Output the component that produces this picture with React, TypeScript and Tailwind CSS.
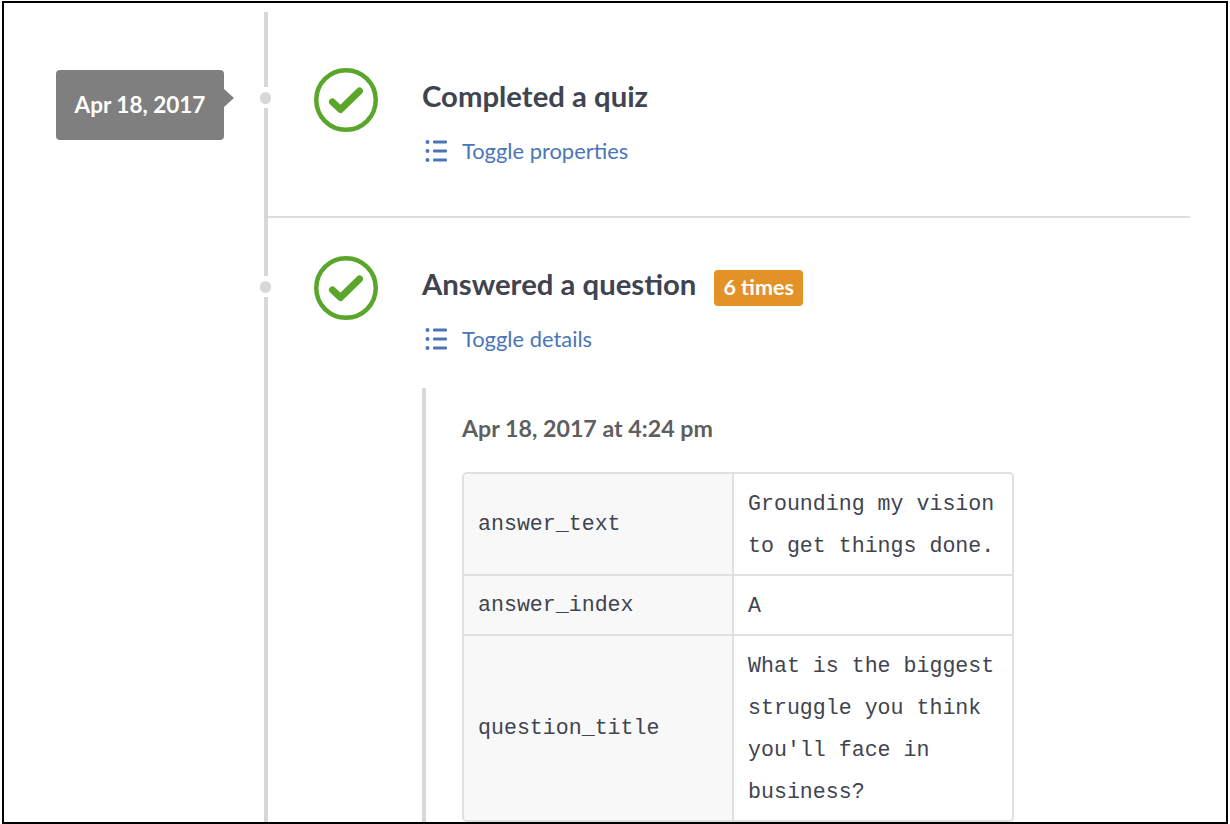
import React from "react";

const sans = "font-['Lato','Open_Sans',sans-serif]";

function CheckIcon() {
  return (
    <svg width="66" height="66" viewBox="0 0 66 66" fill="none" className="shrink-0">
      <circle cx="33" cy="33" r="29.75" stroke="#5aa62b" strokeWidth="4.5" />
      <path d="M19.5 35 L27.5 42.5 L46.5 24" stroke="#5aa62b" strokeWidth="7" strokeLinecap="round" strokeLinejoin="round" />
    </svg>
  );
}

function ListIcon() {
  return (
    <svg width="24" height="24" viewBox="0 0 24 24" fill="#4a76b8" className="shrink-0">
      <circle cx="3.5" cy="3" r="2" />
      <circle cx="3.5" cy="12" r="2" />
      <circle cx="3.5" cy="21" r="2" />
      <rect x="9" y="1.5" width="14" height="3" rx="1" />
      <rect x="9" y="10.5" width="14" height="3" rx="1" />
      <rect x="9" y="19.5" width="14" height="3" rx="1" />
    </svg>
  );
}

function Toggle({ label }: { label: string }) {
  return (
    <a className="flex items-center gap-[14px] pl-[2px] text-[21.9px] leading-[28px] text-[#4a76b8]">
      <ListIcon />
      {label}
    </a>
  );
}

function Dot({ className }: { className: string }) {
  return (
    <div className={`absolute left-[-8px] w-[12px] h-[21px] bg-white flex items-center ${className}`}>
      <div className="w-[11px] h-[12px] rounded-full bg-[#d8d8d8]" />
    </div>
  );
}

const rows = [
  { key: "answer_text", value: "Grounding my vision to get things done." },
  { key: "answer_index", value: "A" },
  { key: "question_title", value: "What is the biggest struggle you think you'll face in business?" },
];

export default function App() {
  return (
    <div className="w-[1230px] h-[824px] overflow-hidden bg-white pl-[2px] pr-[2px] pt-[1px]">
      <div className={`${sans} h-[823px] overflow-hidden border-2 border-black flex`}>
        <div className="w-[260px] shrink-0 pt-[67px] pl-[52px]">
          <div className="relative w-[168px] h-[70px] pb-[1px] rounded-[4px] bg-[#7f7f7f] flex items-center justify-center text-white font-bold text-[22.5px]">
            Apr 18, 2017
            <div className="absolute right-[-10px] top-[19px] border-y-[9px] border-y-transparent border-l-[10px] border-l-[#7f7f7f]" />
          </div>
        </div>

        <div className="relative mt-[9px] border-l-4 border-[#d8d8d8] w-[926px] h-[900px] shrink-0">
          <section className="relative h-[206px] border-b-2 border-[#dcdcdc] pl-[45px] pt-[55px] flex gap-[43px]">
            <Dot className="top-[75px]" />
            <CheckIcon />
            <div>
              <h2 className="text-[29.3px] leading-[36px] font-bold text-[#3f4450] mt-[11px]">Completed a quiz</h2>
              <div className="mt-[23px]">
                <Toggle label="Toggle properties" />
              </div>
            </div>
          </section>

          <section className="relative pl-[45px] pt-[37px] flex gap-[43px]">
            <Dot className="top-[58px]" />
            <CheckIcon />
            <div>
              <div className="flex items-start gap-[18px] mt-[11px]">
                <h2 className="text-[29.3px] leading-[36px] font-bold text-[#3f4450]">Answered a question</h2>
                <span className="mt-[4px] h-[36px] px-[9px] rounded-[4px] bg-[#e39227] text-white font-bold text-[21.5px] leading-[34px]">6 times</span>
              </div>
              <div className="mt-[19px]">
                <Toggle label="Toggle details" />
              </div>
              <div className="mt-[35px] border-l-4 border-[#d8d8d8] pl-[36px] pt-[26px]">
                <h3 className="text-[23.2px] leading-[28px] font-bold text-[#5f5f5f]">Apr 18, 2017 at 4:24 pm</h3>
                <div className="mt-[30px] w-[552px] rounded-[5px] border-2 border-[#e0e0e0] overflow-hidden">
                  <table className="w-full border-collapse table-fixed font-['Liberation_Mono',monospace] text-[21.6px] text-[#3f4450]">
                    <tbody>
                      {rows.map((r, i) => (
                        <tr key={r.key} className={i > 0 ? "border-t-2 border-[#e0e0e0]" : ""}>
                          <td className="w-[269px] bg-[#f8f8f8] px-[14px] border-r-2 border-[#e0e0e0]">{r.key}</td>
                          <td className="pl-[14px] pr-[14px] pt-[9px] pb-[7px] leading-[42px]">{r.value}</td>
                        </tr>
                      ))}
                    </tbody>
                  </table>
                </div>
              </div>
            </div>
          </section>
        </div>
      </div>
    </div>
  );
}
